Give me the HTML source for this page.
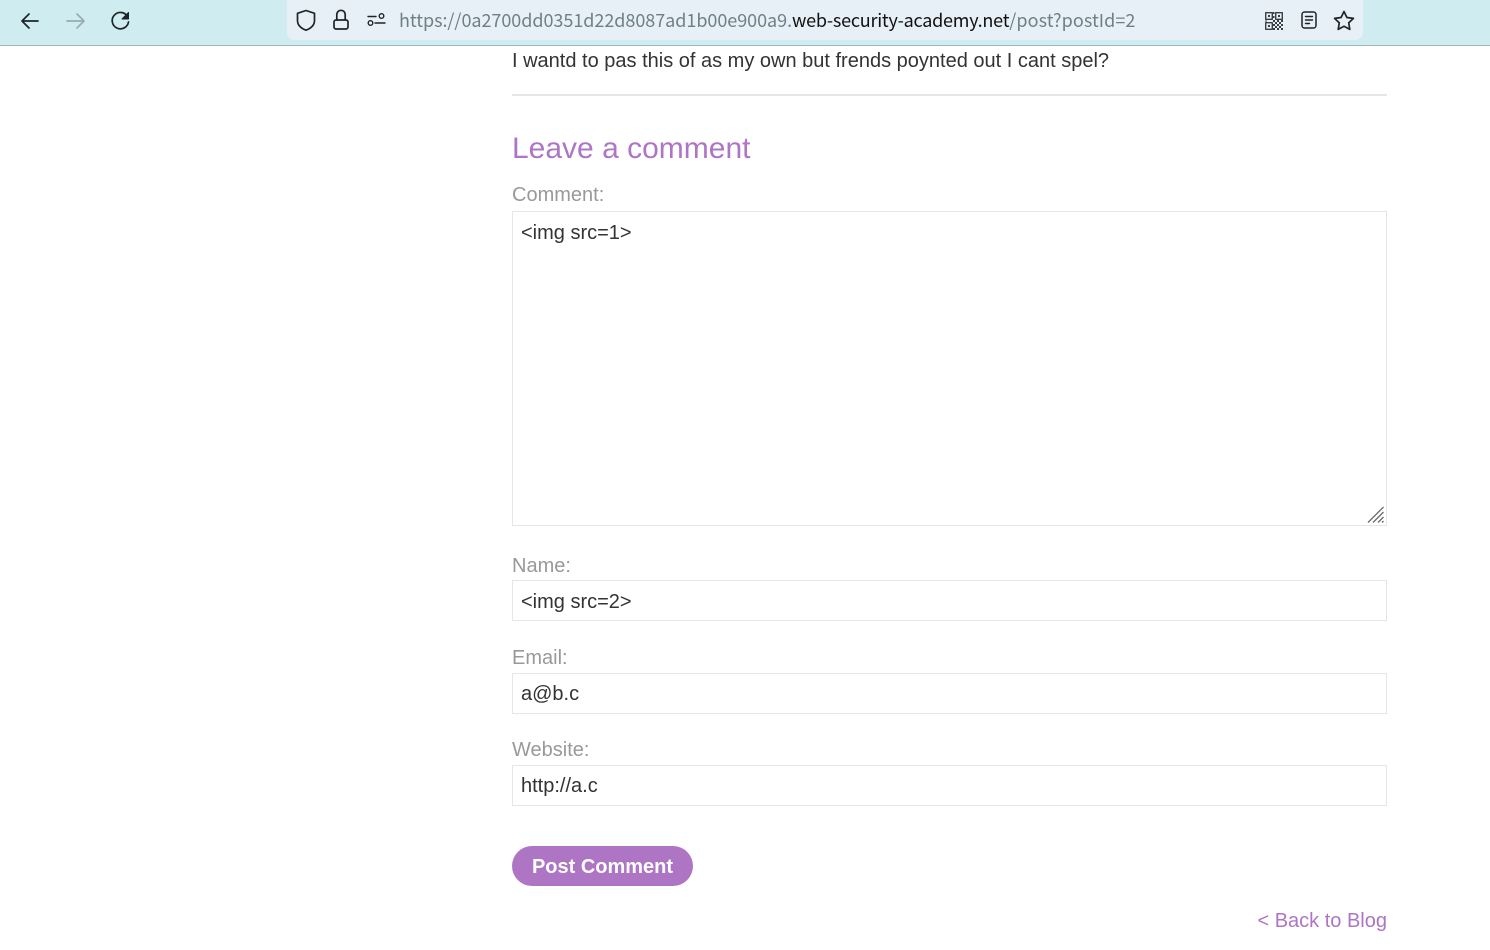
<!DOCTYPE html>
<html><head><meta charset="utf-8"><style>
html,body{margin:0;padding:0;background:#fff;width:1490px;height:950px;overflow:hidden;font-family:"Liberation Sans",Arial,sans-serif}
.a{position:absolute;white-space:nowrap}
#bar{left:0;top:0;width:1490px;height:45px;background:#cfedf1;border-bottom:1px solid #9fb7ba}
#url{left:287px;top:0;width:1076px;height:40px;background:#e7f0f7;border-radius:0 0 8px 8px}
#urltext{left:399px;top:8px;font:18px/24px "Noto Sans CJK SC","Liberation Sans",sans-serif;color:#6f7f86;letter-spacing:-.045px}
#urltext b{font-weight:400;color:#111;letter-spacing:-.24px}
#urltext i{font-style:normal;letter-spacing:.07px}
.t{font-size:20px;line-height:24px;color:#333332}
.l{font-size:20px;line-height:24px;color:#999}
.box{left:512px;width:873px;border:1px solid #e6e6e6;background:#fff}
.v{left:521px;font-size:20px;line-height:24px;color:#333332}
svg{position:absolute;overflow:visible}
</style></head><body>
<div class="a" id="bar"></div>
<div class="a" id="url"></div>
<svg style="left:0;top:0" width="1490" height="45" fill="none" stroke="#1f2428" stroke-width="1.7" stroke-linecap="round" stroke-linejoin="round">
<path d="M38 21H22M29 14l-7 7 7 7"/>
<path d="M83.500 21H67M77 14l7 7-7 7" stroke="#9aabb0"/>
<path d="M127.500 16.500a8.200 8.200 0 1 0 1 5.500"/><path d="M128.500 12.500v6.500h-6.500z" fill="#1f2428" stroke-width="1"/>
<path d="M306 10.500l8.500 2.800v7.200c0 4.500-3.500 7.800-8.500 9.700-5-1.900-8.500-5.200-8.500-9.700v-7.200z"/>
<rect x="334" y="20" width="14" height="9" rx="2"/><path d="M336.800 20v-5.500a4.200 4.200 0 0 1 8.400 0V20"/>
<g stroke-width="1.400"><path d="M368 16.500h8M375 23h10"/><circle cx="381.500" cy="16" r="2.300"/><circle cx="370.500" cy="23" r="2.300"/></g>
<g stroke-width="1.400" stroke="#3a4044" stroke-linecap="butt"><rect x="1265.700" y="12.700" width="6.600" height="6.600"/><rect x="1275.700" y="12.700" width="6.600" height="6.600"/><rect x="1265.700" y="22.700" width="6.600" height="6.600"/></g>
<path d="M1268 15h2v2h-2zM1278 15h2v2h-2zM1268 25h2v2h-2zM1265 20.500h2v1h-2zM1273 12h1.500v2h-1.500zM1273 16h1.500v2h-1.500zM1273 20h2v2h-2zM1277 20h2v2h-2zM1281 20h2v2h-2zM1275 22h2v2h-2zM1279 22h2v2h-2zM1273 24h2v2h-2zM1277 24h2v2h-2zM1281 24h2v2h-2zM1275 26h2v2h-2zM1279 26h2v2h-2zM1273 28h2v2h-2zM1277 28h2v2h-2zM1281 28h2v2h-2z" fill="#3a4044" stroke="none"/>
<rect x="1302" y="12" width="14" height="16" rx="2.500" stroke-width="1.500"/><path d="M1305.500 16.500h7M1305.500 20h7M1305.500 23.500h4" stroke-width="1.400"/>
<path d="M1344 11.500l2.900 6 6.500.9-4.700 4.500 1.100 6.500-5.800-3.100-5.800 3.100 1.100-6.500-4.700-4.500 6.500-.9z"/>
</svg>
<div class="a" id="urltext">https://0a2700dd0351d22d8087ad1b00e900a9.<b>web-security-academy.net</b><i>/post?postId=2</i></div>

<div class="a t" style="left:512px;top:49px">I wantd to pas this of as my own but frends poynted out I cant spel?</div>
<div class="a" style="left:512px;top:94px;width:875px;height:2px;background:#e6e6e6"></div>
<div class="a" style="left:512px;top:130px;font-size:30px;line-height:38px;color:#ae75c5">Leave a comment</div>

<div class="a l" style="left:512px;top:183px">Comment:</div>
<div class="a box" style="top:211px;height:313px"></div>
<div class="a v" style="top:221px">&lt;img src=1&gt;</div>
<svg style="left:1366px;top:505px" width="20" height="20" stroke="#6b6b6b" stroke-width="1.300" fill="none"><path d="M2 17.500L17.500 2M7 17.500L17.500 7M12 17.500l5.500-5.500M16 17.500l1.500-1.500"/></svg>

<div class="a l" style="left:512px;top:554px">Name:</div>
<div class="a box" style="top:580px;height:39px"></div>
<div class="a v" style="top:590px">&lt;img src=2&gt;</div>

<div class="a l" style="left:512px;top:646px">Email:</div>
<div class="a box" style="top:673px;height:39px"></div>
<div class="a v" style="top:682px">a@b.c</div>

<div class="a l" style="left:512px;top:738px">Website:</div>
<div class="a box" style="top:765px;height:39px"></div>
<div class="a v" style="top:774px">http://a.c</div>

<div class="a" style="left:512px;top:846px;width:181px;height:40px;border-radius:20px;background:#ae75c5;color:#fff;font-weight:700;font-size:20px;line-height:42px;text-align:center">Post Comment</div>
<div class="a" style="right:103px;top:909px;font-size:20px;line-height:24px;color:#ae75c5">&lt; Back to Blog</div>
</body></html>
